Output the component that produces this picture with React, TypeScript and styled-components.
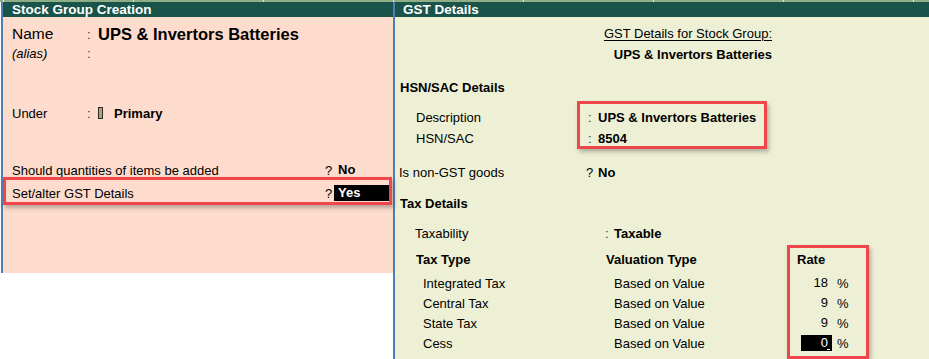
import React from "react";
import styled, { createGlobalStyle } from "styled-components";

const GlobalStyle = createGlobalStyle`
  html, body {
    margin: 0;
    padding: 0;
    background: #ffffff;
  }
  body {
    font-family: "Liberation Sans", Arial, sans-serif;
    font-size: 13px;
    color: #000;
  }
`;

const Screen = styled.div`
  position: relative;
  width: 929px;
  height: 359px;
  overflow: hidden;
  display: flex;
  flex-direction: column;
  background: #ffffff;
`;

const TabStrip = styled.div`
  display: flex;
  height: 2px;
  padding-left: 3px;
  background: #8fae88;
`;

const TabEdge = styled.span`
  flex: none;
  width: 129px;
  border-left: 1px solid #dde8d8;
`;

const Panels = styled.div`
  flex: 1;
  display: flex;
  align-items: flex-start;
`;

const LeftPanel = styled.section`
  width: 390px;
  height: 271px;
  margin-left: 1px;
  border-left: 2px solid #4d7fb6;
  background: #fddccd;
  display: flex;
  flex-direction: column;
`;

const RightPanel = styled.section`
  flex: 1;
  align-self: stretch;
  border-left: 2px solid #4d7fb6;
  background: #eef0d5;
  display: flex;
  flex-direction: column;
`;

const PanelHeader = styled.div<{ $pad: number }>`
  height: 15px;
  line-height: 15px;
  padding-left: ${(p) => p.$pad}px;
  background: #18544a;
  color: #ffffff;
  font-weight: bold;
  font-size: 13.5px;
`;

const LeftBody = styled.div`
  display: flex;
  flex-direction: column;
  padding-left: 9px;
`;

const FieldRow = styled.div<{ $top: number; $h?: number }>`
  display: grid;
  grid-template-columns: 75px 11px 1fr;
  align-items: center;
  margin-top: ${(p) => p.$top}px;
  height: ${(p) => p.$h ?? 16}px;
  white-space: nowrap;
`;

const BigLabel = styled.span`
  font-size: 15.5px;
`;

const BigValue = styled.span`
  font-size: 16.5px;
  font-weight: bold;
`;

const AliasLabel = styled.span`
  font-style: italic;
`;

const Colon = styled.span`
  color: #333;
`;

const Bold = styled.span`
  font-weight: bold;
`;

const UnderValue = styled.span`
  display: flex;
  align-items: center;
`;

const ListMark = styled.span`
  display: inline-block;
  width: 3px;
  height: 10px;
  margin-right: 11px;
  border: 1px solid #2b2b2b;
  background: #b9a06a;
`;

const QuestionRow = styled.div<{ $top: number }>`
  display: grid;
  grid-template-columns: 313px 9px 55px;
  align-items: center;
  margin-top: ${(p) => p.$top}px;
  height: 16px;
  white-space: nowrap;
`;

const Answer = styled.span<{ $active?: boolean }>`
  height: 16px;
  line-height: 16px;
  padding-left: 4px;
  font-weight: bold;
  background: ${(p) => (p.$active ? "#000" : "transparent")};
  color: ${(p) => (p.$active ? "#fff" : "#000")};
`;

const TitleBlock = styled.div`
  width: 377px;
  margin-top: 9px;
  display: flex;
  flex-direction: column;
  align-items: flex-end;
  white-space: nowrap;
`;

const TitleLine = styled.span`
  height: 16px;
  line-height: 16px;
  text-decoration: underline;
  text-underline-offset: 2px;
`;

const TitleName = styled.span`
  margin-top: 5px;
  height: 16px;
  line-height: 16px;
  font-weight: bold;
`;

const SectionHead = styled.div<{ $top: number }>`
  margin-top: ${(p) => p.$top}px;
  padding-left: 5px;
  height: 16px;
  line-height: 16px;
  font-weight: bold;
`;

const DetailRow = styled.div<{ $top: number; $indent: number; $cols: string }>`
  display: grid;
  grid-template-columns: ${(p) => p.$cols};
  align-items: center;
  margin-top: ${(p) => p.$top}px;
  padding-left: ${(p) => p.$indent}px;
  height: 16px;
  white-space: nowrap;
`;

const TaxTable = styled.div`
  display: flex;
  flex-direction: column;
  margin-top: 10px;
  padding-left: 21px;
`;

const TaxRow = styled.div<{ $head?: boolean }>`
  display: grid;
  grid-template-columns: 190px 181px 1fr;
  align-items: center;
  height: ${(p) => (p.$head ? 16 : 20)}px;
  margin-bottom: ${(p) => (p.$head ? 6 : 0)}px;
  font-weight: ${(p) => (p.$head ? "bold" : "normal")};
  white-space: nowrap;
`;

const Cell = styled.span<{ $pad: number }>`
  padding-left: ${(p) => p.$pad}px;
`;

const RateCell = styled.span`
  display: flex;
  align-items: center;
`;

const RateValue = styled.span<{ $active?: boolean }>`
  position: relative;
  width: 27px;
  height: 16px;
  line-height: 16px;
  margin-left: 14px;
  padding-right: 4px;
  text-align: right;
  background: ${(p) => (p.$active ? "#000" : "transparent")};
  color: ${(p) => (p.$active ? "#fff" : "#000")};
`;

const Caret = styled.span`
  position: absolute;
  right: 2px;
  bottom: 1px;
  width: 3px;
  height: 1px;
  background: #fff;
`;

const Percent = styled.span`
  margin-left: 5px;
`;

const Highlight = styled.div<{ $x: number; $y: number; $w: number; $h: number }>`
  position: absolute;
  left: ${(p) => p.$x}px;
  top: ${(p) => p.$y}px;
  width: ${(p) => p.$w}px;
  height: ${(p) => p.$h}px;
  box-sizing: border-box;
  border: 3px solid #ef464b;
  box-shadow: 2px 3px 4px rgba(60, 60, 60, 0.35);
  pointer-events: none;
`;

const taxes = [
  { name: "Integrated Tax", rate: "18" },
  { name: "Central Tax", rate: "9" },
  { name: "State Tax", rate: "9" },
  { name: "Cess", rate: "0", active: true },
];

export default function App() {
  return (
    <>
      <GlobalStyle />
      <Screen>
        <TabStrip>
          {Array.from({ length: 8 }).map((_, i) => (
            <TabEdge key={i} />
          ))}
        </TabStrip>
        <Panels>
          <LeftPanel>
            <PanelHeader $pad={9}>Stock Group Creation</PanelHeader>
            <LeftBody>
              <FieldRow $top={7} $h={20}>
                <BigLabel>Name</BigLabel>
                <Colon>:</Colon>
                <BigValue>UPS &amp; Invertors Batteries</BigValue>
              </FieldRow>
              <FieldRow $top={1}>
                <AliasLabel>(alias)</AliasLabel>
                <Colon>:</Colon>
                <span />
              </FieldRow>
              <FieldRow $top={44}>
                <span>Under</span>
                <Colon>:</Colon>
                <UnderValue>
                  <ListMark />
                  <Bold>Primary</Bold>
                </UnderValue>
              </FieldRow>
              <QuestionRow $top={41}>
                <span>Should quantities of items be added</span>
                <span>?</span>
                <Answer>No</Answer>
              </QuestionRow>
              <QuestionRow $top={7}>
                <span>Set/alter GST Details</span>
                <span>?</span>
                <Answer $active>Yes</Answer>
              </QuestionRow>
            </LeftBody>
          </LeftPanel>

          <RightPanel>
            <PanelHeader $pad={8}>GST Details</PanelHeader>
            <TitleBlock>
              <TitleLine>GST Details for Stock Group:</TitleLine>
              <TitleName>UPS &amp; Invertors Batteries</TitleName>
            </TitleBlock>

            <SectionHead $top={17}>HSN/SAC Details</SectionHead>
            <DetailRow $top={13} $indent={21} $cols="172px 10px 1fr">
              <span>Description</span>
              <Colon>:</Colon>
              <Bold>UPS &amp; Invertors Batteries</Bold>
            </DetailRow>
            <DetailRow $top={5} $indent={21} $cols="172px 10px 1fr">
              <span>HSN/SAC</span>
              <Colon>:</Colon>
              <Bold>8504</Bold>
            </DetailRow>
            <DetailRow $top={18} $indent={4} $cols="187px 12px 1fr">
              <span>Is non-GST goods</span>
              <span>?</span>
              <Bold>No</Bold>
            </DetailRow>

            <SectionHead $top={16}>Tax Details</SectionHead>
            <DetailRow $top={13} $indent={20} $cols="190px 9px 1fr">
              <span>Taxability</span>
              <Colon>:</Colon>
              <Bold>Taxable</Bold>
            </DetailRow>

            <TaxTable>
              <TaxRow $head>
                <span>Tax Type</span>
                <span>Valuation Type</span>
                <Cell $pad={10}>Rate</Cell>
              </TaxRow>
              {taxes.map((t) => (
                <TaxRow key={t.name}>
                  <Cell $pad={7}>{t.name}</Cell>
                  <Cell $pad={8}>Based on Value</Cell>
                  <RateCell>
                    <RateValue $active={t.active}>
                      {t.rate}
                      {t.active && <Caret />}
                    </RateValue>
                    <Percent>%</Percent>
                  </RateCell>
                </TaxRow>
              ))}
            </TaxTable>
          </RightPanel>
        </Panels>

        <Highlight $x={3} $y={177} $w={389} $h={28} />
        <Highlight $x={577} $y={101} $w={190} $h={48} />
        <Highlight $x={787} $y={245} $w={82} $h={114} />
      </Screen>
    </>
  );
}
